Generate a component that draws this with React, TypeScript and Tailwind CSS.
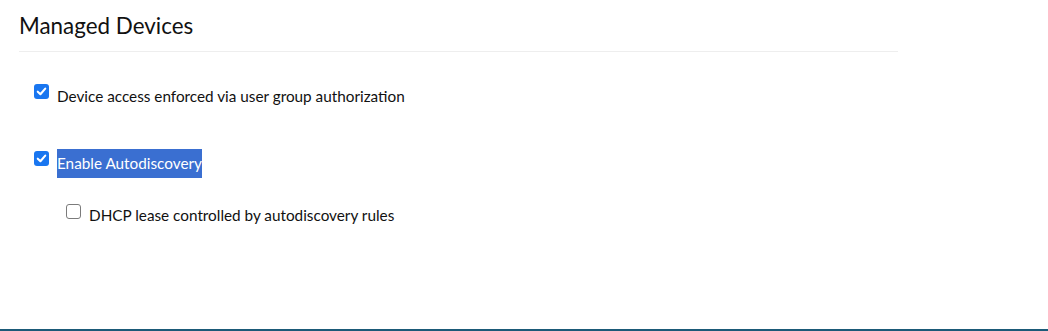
import React from "react";

function Box({ checked }: { checked: boolean }) {
  if (checked) {
    return (
      <span className="mt-[2px] w-[15px] h-[15px] shrink-0 rounded-[3px] bg-[#1976f0] flex items-center justify-center">
        <svg width="11" height="11" viewBox="0 0 10 10" fill="none">
          <path d="M1.6 5.2 L4 7.5 L8.4 2.4" stroke="white" strokeWidth="1.9" strokeLinecap="round" strokeLinejoin="round" />
        </svg>
      </span>
    );
  }
  return <span className="mt-[3px] w-[15px] h-[15px] shrink-0 rounded-[3px] border-[1.5px] border-[#7b7b7b] bg-white" />;
}

function Row({ checked, label, selected, indent }: { checked: boolean; label: string; selected?: boolean; indent?: boolean }) {
  return (
    <label className={`flex items-start ${indent ? "pl-[47px]" : "pl-[15px]"}`}>
      <Box checked={checked} />
      <span
        className={`ml-[8px] text-[15.3px] leading-[29px] ${selected ? "bg-[#3a6fd1] text-white" : "text-[#111]"}`}
      >
        {label}
      </span>
    </label>
  );
}

export default function App() {
  return (
    <div className="w-[1048px] h-[331px] bg-white flex flex-col" style={{ fontFamily: '"Lato", "Noto Sans", sans-serif' }}>
      <div className="flex-1 pl-[19px]">
        <div className="w-[879px] h-[52px] border-b border-[#eeeeee] flex items-center">
          <h1 className="text-[22.4px] text-[#111] leading-none pt-[2px]">Managed Devices</h1>
        </div>
        <div className="pt-[30px]">
          <Row checked label="Device access enforced via user group authorization" />
        </div>
        <div className="pt-[38px]">
          <Row checked selected label="Enable Autodiscovery" />
        </div>
        <div className="pt-[23px]">
          <Row checked={false} indent label="DHCP lease controlled by autodiscovery rules" />
        </div>
      </div>
      <div className="h-[2px] bg-[#1b5a78]" />
    </div>
  );
}
